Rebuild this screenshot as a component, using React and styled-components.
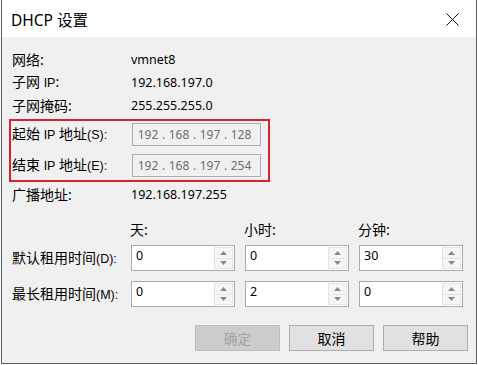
import { createGlobalStyle, styled } from "styled-components";

const GlobalStyle = createGlobalStyle`
  html, body {
    margin: 0;
    padding: 0;
    background: #ffffff;
  }
  * {
    box-sizing: border-box;
  }
`;

const CJK = `"Noto Sans", "Noto Sans CJK SC", sans-serif`;

const ipStart = ["192", "168", "197", "128"];
const ipEnd = ["192", "168", "197", "254"];

const leaseRows = [
  { label: "默认租用时间", key: "(D):", values: ["0", "0", "30"] },
  { label: "最长租用时间", key: "(M):", values: ["0", "2", "0"] },
];

const CloseIcon = () => (
  <svg width="13" height="13" viewBox="0 0 13 13">
    <path d="M0.5 0.5 L12.5 12.5 M12.5 0.5 L0.5 12.5" stroke="#111" strokeWidth="1" />
  </svg>
);

const Arrow = ({ down }) => (
  <svg width="7" height="4" viewBox="0 0 7 4">
    <path d={down ? "M0 0 H7 L3.5 4 Z" : "M0 4 H7 L3.5 0 Z"} fill="#8a8a8a" />
  </svg>
);

const IpField = ({ parts }) => (
  <IpBox>
    {parts.map((p, i) => (
      <IpPart key={i}>
        <IpNum>{p}</IpNum>
        {i < parts.length - 1 && <IpDot>.</IpDot>}
      </IpPart>
    ))}
  </IpBox>
);

const Spinner = ({ value }) => (
  <SpinBox>
    <SpinValue>{value}</SpinValue>
    <SpinButtons>
      <SpinBtn>
        <Arrow />
      </SpinBtn>
      <SpinBtn>
        <Arrow down />
      </SpinBtn>
    </SpinButtons>
  </SpinBox>
);

const App = () => {
  return (
    <Page>
      <GlobalStyle />
      <Window>
        <TitleBar>
          <Title>DHCP 设置</Title>
          <CloseButton>
            <CloseIcon />
          </CloseButton>
        </TitleBar>
        <Body>
          <InfoRow>
            <Label>网络:</Label>
            <Value>vmnet8</Value>
          </InfoRow>
          <InfoRow>
            <Label>
              子网 <Small>IP</Small>:
            </Label>
            <Value>192.168.197.0</Value>
          </InfoRow>
          <InfoRow>
            <Label>子网掩码:</Label>
            <Value>255.255.255.0</Value>
          </InfoRow>

          <Highlight>
            <FieldRow>
              <Label>
                起始 <Small>IP</Small> 地址<Small>(S):</Small>
              </Label>
              <IpField parts={ipStart} />
            </FieldRow>
            <FieldRow>
              <Label>
                结束 <Small>IP</Small> 地址<Small>(E):</Small>
              </Label>
              <IpField parts={ipEnd} />
            </FieldRow>
          </Highlight>

          <InfoRow $gap>
            <Label>广播地址:</Label>
            <Value>192.168.197.255</Value>
          </InfoRow>

          <LeaseGrid>
            <span />
            <Heading>天:</Heading>
            <Heading>小时:</Heading>
            <Heading>分钟:</Heading>
            {leaseRows.map((row) => (
              <LeaseRow key={row.key}>
                <RowLabel>
                  {row.label}
                  <Small>{row.key}</Small>
                </RowLabel>
                {row.values.map((v, i) => (
                  <Spinner key={i} value={v} />
                ))}
              </LeaseRow>
            ))}
          </LeaseGrid>

          <ButtonBar>
            <Button disabled>确定</Button>
            <Button>取消</Button>
            <Button>帮助</Button>
          </ButtonBar>
        </Body>
      </Window>
    </Page>
  );
};

const Page = styled.div`
  width: 478px;
  height: 365px;
  overflow: hidden;
`;

const Window = styled.div`
  width: 476px;
  height: 364px;
  margin-left: 1px;
  border-left: 1px solid #5c5c5c;
  border-right: 1px solid #5c5c5c;
  border-bottom: 1px solid #5c5c5c;
  background: #f0f0f0;
  display: flex;
  flex-direction: column;
`;

const TitleBar = styled.div`
  height: 37px;
  flex-shrink: 0;
  background: #ffffff;
  display: flex;
  align-items: center;
  justify-content: space-between;
  padding: 1px 0 0 9px;
`;

const Title = styled.div`
  font-family: ${CJK};
  font-size: 15.5px;
  color: #000;
`;

const CloseButton = styled.div`
  width: 46px;
  height: 36px;
  display: flex;
  align-items: center;
  justify-content: center;
  margin-right: 1px;
  padding-top: 1px;
`;

const Body = styled.div`
  flex: 1;
  padding: 11px 0 0 7px;
  display: flex;
  flex-direction: column;
`;

const Label = styled.div`
  font-family: ${CJK};
  font-size: 14px;
  color: #000;
  white-space: nowrap;
  line-height: 20px;
`;

const Heading = styled(Label)`
  height: 20px;
  margin-left: -1px;
`;

const RowLabel = styled(Label)`
  align-self: center;
`;

const Small = styled.span`
  font-family: "Liberation Sans", sans-serif;
  font-size: 12.5px;
`;

const Value = styled.div`
  font-family: "Noto Sans", sans-serif;
  font-size: 12.5px;
  color: #000;
`;

const InfoRow = styled.div`
  display: grid;
  grid-template-columns: 119px auto;
  align-items: center;
  height: 23px;
  padding-left: 3px;
  margin-top: ${(p) => (p.$gap ? "1px" : "0")};
`;

const Highlight = styled.div`
  width: 261px;
  margin-top: 2px;
  border: 2px solid #d7232c;
  padding: 2px 7px 3px 1px;
  display: flex;
  flex-direction: column;
  gap: 8px;
`;

const FieldRow = styled.div`
  display: grid;
  grid-template-columns: 120px 129px;
  align-items: center;
  height: 23px;
`;

const IpBox = styled.div`
  height: 23px;
  border: 1px solid #acacac;
  background: #f0f0f0;
  display: flex;
  align-items: center;
  padding-left: 3px;
  font-family: "Noto Sans", sans-serif;
  font-size: 12px;
  color: #6d6d6d;
`;

const IpPart = styled.span`
  display: flex;
`;

const IpNum = styled.span`
  width: 24px;
  text-align: center;
`;

const IpDot = styled.span`
  width: 7px;
  text-align: center;
`;

const LeaseGrid = styled.div`
  margin-top: 14px;
  padding-left: 3px;
  display: grid;
  grid-template-columns: 109px 104px 104px 104px;
  column-gap: 10px;
`;

const LeaseRow = styled.div`
  display: contents;
`;

const SpinBox = styled.div`
  height: 26px;
  margin-top: 5px;
  margin-bottom: 5px;
  border: 1px solid #a9a9a9;
  background: #ffffff;
  display: flex;
  justify-content: space-between;
  padding: 1px;
`;

const SpinValue = styled.div`
  font-family: "Noto Sans", sans-serif;
  font-size: 12.5px;
  line-height: 15px;
  padding: 1px 0 0 3px;
  color: #000;
`;

const SpinButtons = styled.div`
  width: 19px;
  display: flex;
  flex-direction: column;
`;

const SpinBtn = styled.div`
  flex: 1;
  display: flex;
  align-items: center;
  justify-content: center;
  background: #f6f6f6;
  border: 1px solid #e3e3e3;
  & + & {
    border-top: none;
  }
`;

const ButtonBar = styled.div`
  margin-top: 13px;
  display: flex;
  justify-content: flex-end;
  gap: 9px;
  padding-right: 8px;
`;

const Button = styled.button`
  width: 85px;
  height: 26px;
  margin: 0;
  padding: 0;
  font-family: ${CJK};
  font-size: 14px;
  color: ${(p) => (p.disabled ? "#a3a3a3" : "#000")};
  background: ${(p) => (p.disabled ? "#cccccc" : "#e1e1e1")};
  border: 1px solid ${(p) => (p.disabled ? "#bfbfbf" : "#adadad")};
  border-radius: 0;
`;

export default App;
